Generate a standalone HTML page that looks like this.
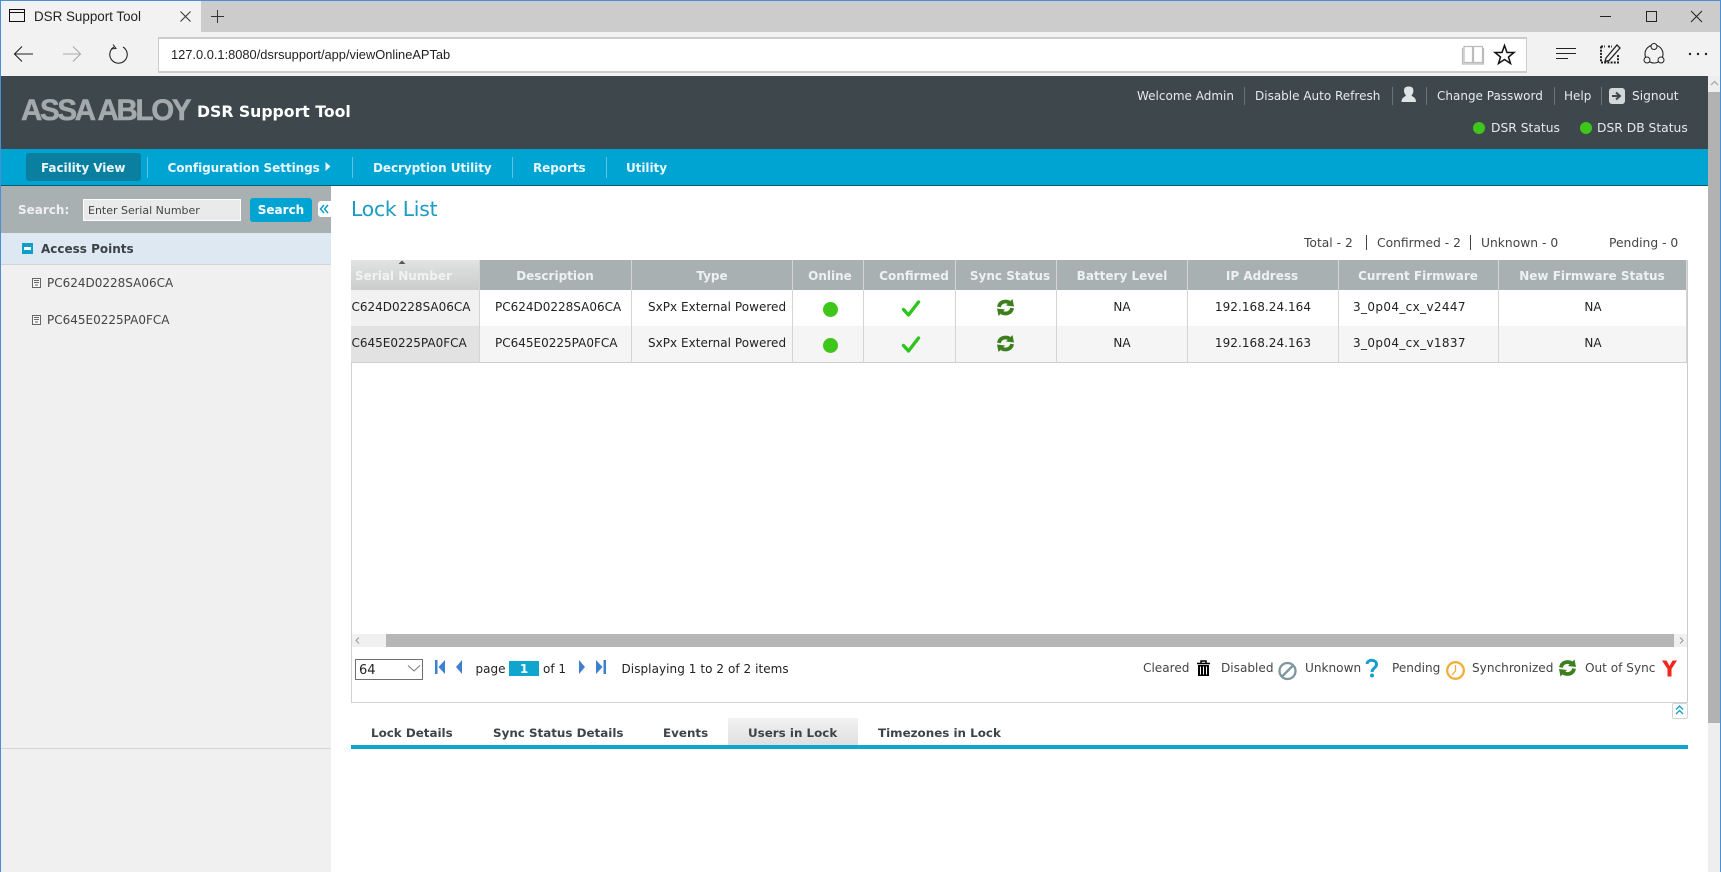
<!DOCTYPE html>
<html lang="en"><head><meta charset="utf-8"><title>DSR Support Tool</title>
<style>
html,body{margin:0;padding:0;width:1721px;height:872px;overflow:hidden;background:#fff}
body{position:relative;font-family:"DejaVu Sans","Liberation Sans",sans-serif;font-size:12px;color:#333}
.b{position:absolute}
.t{position:absolute;white-space:nowrap;line-height:20px;margin-top:-9px}
.c{transform:translateX(-50%)}
.w{color:#fff}
.bd{font-weight:bold}
.ch{font-family:"Liberation Sans",sans-serif;color:#222}
.nav{color:#e8f6fb;font-weight:bold;font-size:12px;letter-spacing:-.06px}
.hd{color:#e6eaeb;font-size:12px}
.th{color:#eef1f1;font-weight:bold;font-size:12px;top:275px}
.td{color:#222;font-size:12px}
.sep{position:absolute;width:1px}
.lg{color:#444;font-size:12.1px;top:667px}
.tab{color:#3c4448;font-weight:bold;font-size:11.9px;top:732px}
svg{position:absolute;left:0;top:0}
</style></head><body>
<!-- browser chrome -->
<div class="b" style="left:0;top:0;width:1721px;height:32px;background:#ccc"></div>
<div class="b" style="left:0;top:0;width:201px;height:32px;background:#f2f2f2"></div>
<div class="b" style="left:0;top:32px;width:1721px;height:44px;background:#f2f2f2"></div>
<div class="b" style="left:158px;top:37px;width:1367px;height:32px;background:#fff;border:1px solid #ccc;border-width:2px 1px"></div>
<div class="t ch" style="left:34px;top:16px;font-size:13.4px">DSR Support Tool</div>
<div class="t ch" style="left:171px;top:54px;font-size:12.85px">127.0.0.1:8080/dsrsupport/app/viewOnlineAPTab</div>
<!-- header -->
<div class="b" style="left:0;top:76px;width:1708px;height:73px;background:#3d474c"></div>
<div class="b" style="left:0;top:149px;width:1708px;height:36px;background:#00a4d3;border-bottom:1px solid #0b5a70"></div>
<div class="b" style="left:26px;top:153px;width:115px;height:28px;background:#0a7f9f;border-radius:3px"></div>
<div class="t" style="left:21px;top:110px;font-family:'Liberation Sans',sans-serif;font-weight:bold;font-size:29.5px;letter-spacing:-2.3px;color:#a4aaac;-webkit-text-stroke:.5px #a4aaac">ASSA ABLOY</div>
<div class="t w bd" style="left:197px;top:111px;font-size:15.7px;font-family:'DejaVu Sans',sans-serif">DSR Support Tool</div>
<div class="t hd" style="left:1137px;top:95px">Welcome Admin</div>
<div class="sep" style="left:1244px;top:87px;height:18px;background:#697276"></div>
<div class="t hd" style="left:1255px;top:95px">Disable Auto Refresh</div>
<div class="sep" style="left:1392px;top:87px;height:18px;background:#697276"></div>
<div class="sep" style="left:1426px;top:87px;height:18px;background:#697276"></div>
<div class="t hd" style="left:1437px;top:95px">Change Password</div>
<div class="sep" style="left:1554px;top:87px;height:18px;background:#697276"></div>
<div class="t hd" style="left:1564px;top:95px">Help</div>
<div class="sep" style="left:1601px;top:87px;height:18px;background:#697276"></div>
<div class="t hd" style="left:1632px;top:95px;font-size:12.2px">Signout</div>
<div class="t hd" style="left:1491px;top:127px;font-size:12.3px">DSR Status</div>
<div class="t hd" style="left:1597px;top:127px;font-size:12.3px">DSR DB Status</div>
<!-- nav -->
<div class="t nav" style="left:41px;top:167px;color:#e9f6fa">Facility View</div>
<div class="sep" style="left:147px;top:157px;height:21px;background:#5cc4e2"></div>
<div class="t nav" style="left:167.5px;top:167px">Configuration Settings</div>
<div class="sep" style="left:352px;top:157px;height:21px;background:#5cc4e2"></div>
<div class="t nav" style="left:373px;top:167px">Decryption Utility</div>
<div class="sep" style="left:512px;top:157px;height:21px;background:#5cc4e2"></div>
<div class="t nav" style="left:533px;top:167px">Reports</div>
<div class="sep" style="left:606px;top:157px;height:21px;background:#5cc4e2"></div>
<div class="t nav" style="left:626px;top:167px">Utility</div>
<!-- sidebar -->
<div class="b" style="left:0;top:186px;width:331px;height:686px;background:#f0f0f0"></div>
<div class="b" style="left:0;top:186px;width:331px;height:47px;background:#a9b0b2"></div>
<div class="b" style="left:0;top:233px;width:331px;height:31px;background:#dde8f3;border-bottom:1px solid #cfd4d6"></div>
<div class="b" style="left:0;top:748px;width:331px;height:1px;background:#d4d4d4"></div>
<div class="t bd" style="left:18px;top:209px;color:#eef0f0;font-size:12px">Search:</div>
<div class="b" style="left:83px;top:199px;width:156px;height:20px;background:#e9ebeb;border:1px solid #fff"></div>
<div class="t" style="left:88px;top:210px;font-size:11px;color:#444">Enter Serial Number</div>
<div class="b" style="left:250px;top:198px;width:62px;height:24px;background:#00a4d3;border-radius:3px"></div>
<div class="t w bd c" style="left:281px;top:209px;font-size:12px">Search</div>
<div class="b" style="left:318px;top:201px;width:13px;height:16px;background:#fff;border-radius:3px 0 0 3px"></div>
<div class="b" style="left:22px;top:243px;width:11px;height:11px;background:#0e9fc9"></div>
<div class="b" style="left:24px;top:247px;width:7px;height:3px;background:#fff"></div>
<div class="t bd" style="left:41px;top:248px;color:#3b4145;font-size:12px">Access Points</div>
<div class="t" style="left:47px;top:282px;color:#444;font-size:12px">PC624D0228SA06CA</div>
<div class="t" style="left:47px;top:319px;color:#444;font-size:12px">PC645E0225PA0FCA</div>
<!-- main -->
<div class="t" style="left:351px;top:209px;font-size:20.3px;color:#1a9cc4;line-height:26px;margin-top:-13px;font-family:'DejaVu Sans',sans-serif;letter-spacing:-.2px">Lock List</div>
<div class="t td" style="left:1304px;top:242px;color:#444;font-size:12.3px">Total - 2</div>
<div class="sep" style="left:1366px;top:235px;height:15px;background:#444"></div>
<div class="t td" style="left:1377px;top:242px;color:#444;font-size:12.3px">Confirmed - 2</div>
<div class="sep" style="left:1470px;top:235px;height:15px;background:#444"></div>
<div class="t td" style="left:1481px;top:242px;color:#444;font-size:12.3px">Unknown - 0</div>
<div class="t td" style="left:1609px;top:242px;color:#444;font-size:12.3px">Pending - 0</div>
<!-- grid -->
<div class="b" style="left:351px;top:260px;width:1337px;height:443px;box-sizing:border-box;border:1px solid #cfd2d3;border-top:0;border-right:1px solid #c8cccc"></div>
<div class="b" style="left:351px;top:260px;width:1336px;height:30px;background:#a9b0b2"></div>
<div class="b" style="left:351px;top:260px;width:128px;height:30px;background:linear-gradient(#e2e2e2,#cbcdcd)"></div>
<div class="b" style="left:351px;top:290px;width:1336px;height:36px;background:#fff"></div>
<div class="b" style="left:351px;top:326px;width:1336px;height:36px;background:#f5f5f5"></div>
<div class="b" style="left:351px;top:290px;width:128px;height:36px;background:#f1f1f1"></div>
<div class="b" style="left:351px;top:326px;width:128px;height:36px;background:#e2e2e2"></div>
<div class="b" style="left:351px;top:362px;width:1337px;height:1px;background:#cdd0d1"></div>
<!-- col lines header -->
<div class="sep" style="left:479px;top:260px;height:103px;background:#d2d4d5"></div>
<div class="sep" style="left:631px;top:260px;height:103px;background:#d2d4d5"></div>
<div class="sep" style="left:792px;top:260px;height:103px;background:#d2d4d5"></div>
<div class="sep" style="left:863px;top:260px;height:103px;background:#d2d4d5"></div>
<div class="sep" style="left:955px;top:260px;height:103px;background:#d2d4d5"></div>
<div class="sep" style="left:1056px;top:260px;height:103px;background:#d2d4d5"></div>
<div class="sep" style="left:1187px;top:260px;height:103px;background:#d2d4d5"></div>
<div class="sep" style="left:1338px;top:260px;height:103px;background:#d2d4d5"></div>
<div class="sep" style="left:1498px;top:260px;height:103px;background:#d2d4d5"></div>
<div class="sep" style="left:1686px;top:260px;height:103px;background:#d2d4d5"></div>
<div class="t th" style="left:355px;color:#f2f2f2">Serial Number</div>
<div class="t th c" style="left:555px">Description</div>
<div class="t th c" style="left:712px">Type</div>
<div class="t th c" style="left:830px">Online</div>
<div class="t th c" style="left:914px">Confirmed</div>
<div class="t th c" style="left:1010px">Sync Status</div>
<div class="t th c" style="left:1122px">Battery Level</div>
<div class="t th c" style="left:1262px">IP Address</div>
<div class="t th c" style="left:1418px">Current Firmware</div>
<div class="t th c" style="left:1592px">New Firmware Status</div>
<div class="t td" style="left:351.5px;top:306px">C624D0228SA06CA</div>
<div class="t td" style="left:495px;top:306px">PC624D0228SA06CA</div>
<div class="t td" style="left:648px;top:306px;letter-spacing:.03px">SxPx External Powered</div>
<div class="t td c" style="left:1122px;top:306px">NA</div>
<div class="t td c" style="left:1263px;top:306px;letter-spacing:.05px">192.168.24.164</div>
<div class="t td" style="left:1353px;top:306px;letter-spacing:.36px">3_0p04_cx_v2447</div>
<div class="t td c" style="left:1593px;top:306px">NA</div>
<div class="t td" style="left:351.5px;top:342px">C645E0225PA0FCA</div>
<div class="t td" style="left:495px;top:342px">PC645E0225PA0FCA</div>
<div class="t td" style="left:648px;top:342px;letter-spacing:.03px">SxPx External Powered</div>
<div class="t td c" style="left:1122px;top:342px">NA</div>
<div class="t td c" style="left:1263px;top:342px;letter-spacing:.05px">192.168.24.163</div>
<div class="t td" style="left:1353px;top:342px;letter-spacing:.36px">3_0p04_cx_v1837</div>
<div class="t td c" style="left:1593px;top:342px">NA</div>
<!-- h scrollbar -->
<div class="b" style="left:352px;top:634px;width:1335px;height:13px;background:#f0f0f0"></div>
<div class="b" style="left:386px;top:634px;width:1288px;height:13px;background:#b6b6b6"></div>
<!-- pager -->
<div class="b" style="left:355px;top:659px;width:66px;height:19px;border:1px solid #6f6f6f;background:#fff"></div>
<div class="t" style="left:359px;top:670px;color:#222;font-size:13px">64</div>
<div class="t td" style="left:475.5px;top:668px">page</div>
<div class="b" style="left:509px;top:661px;width:30px;height:15px;background:#0ea5cf"></div>
<div class="t w bd c" style="left:524px;top:668px">1</div>
<div class="t td" style="left:543px;top:668px">of 1</div>
<div class="t td" style="left:621.500px;top:668px;letter-spacing:.06px">Displaying 1 to 2 of 2 items</div>
<!-- legend -->
<div class="t lg" style="left:1143px">Cleared</div>
<div class="t lg" style="left:1221px">Disabled</div>
<div class="t lg" style="left:1305px">Unknown</div>
<div class="t lg" style="left:1392px">Pending</div>
<div class="t lg" style="left:1472px">Synchronized</div>
<div class="t lg" style="left:1585px">Out of Sync</div>
<div class="b" style="left:1672px;top:703px;width:14px;height:14px;border:1px solid #d3d6d7;border-radius:2px;background:#fff"></div>
<!-- tabs -->
<div class="b" style="left:728px;top:718px;width:130px;height:27px;background:linear-gradient(#f2f2f2,#dfdfdf)"></div>
<div class="b" style="left:351px;top:745px;width:1337px;height:4px;background:#0ea5cf"></div>
<div class="t tab" style="left:371px">Lock Details</div>
<div class="t tab" style="left:493px">Sync Status Details</div>
<div class="t tab" style="left:663px">Events</div>
<div class="t tab" style="left:748px">Users in Lock</div>
<div class="t tab" style="left:878px">Timezones in Lock</div>
<!-- v scrollbar -->
<div class="b" style="left:1708px;top:76px;width:13px;height:796px;background:#eee"></div>
<div class="b" style="left:1708px;top:92px;width:13px;height:631px;background:#b2b2b2"></div>
<!-- window border -->
<div class="b" style="left:0;top:0;width:1721px;height:1px;background:#4a8fd6"></div>
<div class="b" style="left:0;top:0;width:1px;height:872px;background:#4a8fd6"></div>
<div class="b" style="left:1720px;top:0;width:1px;height:872px;background:#4a8fd6"></div>
<svg width="1721" height="872" viewBox="0 0 1721 872" fill="none">
<defs>
<g id="sync"><path d="M-6.500 -0.500C-6 -5 -1 -7.500 4 -5" stroke="#3d7f1e" stroke-width="3.800"/><path d="M0.500 -2L8.500 -1L7 -8.500Z" fill="#3d7f1e"/><path d="M6.500 0.500C6 5 1 7.500 -4 5" stroke="#3d7f1e" stroke-width="3.800"/><path d="M-0.500 2L-8.500 1L-7 8.500Z" fill="#3d7f1e"/></g>
<path id="check" d="M-7.500 0.500L-2.500 6L7.500 -7" stroke="#2fc51d" stroke-width="3.400" stroke-linecap="round" stroke-linejoin="round"/>
<g id="ap"><rect x="0.500" y="0.500" width="8" height="9" stroke="#666" fill="#f6f6f6"/><path d="M2 2.500h5M2 4.500h5M3 7h3" stroke="#666"/></g>
</defs>
<!-- chrome icons -->
<rect x="9.500" y="9.500" width="15" height="12" stroke="#111"/><path d="M9.500 12.500h15" stroke="#111"/>
<path d="M180.500 11.500l10 10M190.500 11.500l-10 10" stroke="#333"/>
<path d="M217.500 10v13M211 16.500h13" stroke="#333"/>
<path d="M33 54H15M22 46.500L14.500 54L22 61.500" stroke="#222" stroke-width="1.100"/>
<path d="M81 54H63M73 46.500L80.500 54L73 61.500" stroke="#aaa" stroke-width="1.100"/>
<path d="M114 47A8.700 8.700 0 1 0 123 47" stroke="#222" stroke-width="1.100"/><path d="M113 44.500L116 48.500L111 49" stroke="#222" stroke-width="1"/>
<path d="M1464 46.500h8.500v16h-8.500zM1473.500 46.500h9v16h-9zM1462.500 48v16h21v-16" stroke="#bbb" stroke-width="1.200"/>
<path d="M1504.500 45.500L1507 52.500H1514L1508.500 57L1510.500 63.500L1504.500 59.500L1498.500 63.500L1500.500 57L1495 52.500H1502Z" stroke="#111" stroke-width="1.500"/>
<path d="M1556 48.500H1576M1556 53.500H1576M1556 58.500H1568" stroke="#222" stroke-width="1.100"/>
<path d="M1601 46.500h4M1608 46.500h4M1601 46.500v16h17v-8" stroke="#222" stroke-dasharray="2 1.200" stroke-width="2"/>
<path d="M1606 58L1617 45L1620 48L1609 60.500L1605 61.500Z" stroke="#222" stroke-width="1.300"/>
<circle cx="1654" cy="54" r="9" stroke="#222" stroke-width="1.100"/>
<circle cx="1654" cy="46.500" r="3" stroke="#222" fill="#f2f2f2"/><circle cx="1647" cy="60" r="3" stroke="#222" fill="#f2f2f2"/><circle cx="1661" cy="60" r="3" stroke="#222" fill="#f2f2f2"/>
<circle cx="1690" cy="54" r="1.200" fill="#222"/><circle cx="1698" cy="54" r="1.200" fill="#222"/><circle cx="1706" cy="54" r="1.200" fill="#222"/>
<path d="M1600 16.500h11" stroke="#222"/><rect x="1646.500" y="11.500" width="10" height="10" stroke="#222"/><path d="M1691 11l11 11M1702 11l-11 11" stroke="#222"/>
<!-- header icons -->
<path d="M1401.500 102C1401.500 97 1405 97 1406 95.500C1404.500 94 1404 92 1404 90.500C1404 87.500 1406 86.500 1408.700 86.500C1411.400 86.500 1413.400 87.500 1413.400 90.500C1413.400 92 1413 94 1411.500 95.500C1412.500 97 1416 97 1416 102Z" fill="#dfe3e4"/>
<rect x="1609" y="88" width="16" height="16" rx="3" fill="#d5d8d9"/><path d="M1612 96h7M1616 92.500L1620 96L1616 99.500" stroke="#3d474c" stroke-width="2"/>
<circle cx="1479" cy="128" r="6" fill="#3fc61b"/><circle cx="1586" cy="128" r="6" fill="#3fc61b"/>
<path d="M330.500 166.500L325.500 162V171Z" fill="#e8f6fb"/>
<!-- sidebar icons -->
<path d="M328 205L324.500 209L328 213M324 205L320.500 209L324 213" stroke="#0e9fc9" stroke-width="1.500"/>
<use href="#ap" x="32" y="278"/><use href="#ap" x="32" y="315"/>
<path d="M402 260.500L398.500 264H405.500Z" fill="#555"/>
<!-- table icons -->
<circle cx="830.500" cy="309.500" r="7.500" fill="#3fc61b"/><circle cx="830.500" cy="345.500" r="7.500" fill="#3fc61b"/>
<use href="#check" x="911" y="309"/><use href="#check" x="911" y="345"/>
<use href="#sync" x="1005.500" y="307.500"/><use href="#sync" x="1005.500" y="343.500"/>
<!-- h scrollbar arrows -->
<path d="M359 637.500L356 640.500L359 643.500" stroke="#999"/><path d="M1680 637.500L1683 640.500L1680 643.500" stroke="#999"/>
<!-- v scrollbar arrow -->
<path d="M1711 85L1714.500 81.500L1718 85" stroke="#aaa" stroke-width="1.300"/>
<!-- pager icons -->
<path d="M408 665.500L414 671L420 665.500" stroke="#777"/>
<path d="M435 660h2.500v14h-2.500z" fill="#3f7fd0"/><path d="M445 660V674L438.500 667Z" fill="#3f7fd0"/>
<path d="M462 660V674L456 667Z" fill="#3f7fd0"/>
<path d="M579 660V674L585 667Z" fill="#3f7fd0"/>
<path d="M596 660V674L602.500 667Z" fill="#3f7fd0"/><path d="M603.500 660h2.500v14h-2.500z" fill="#3f7fd0"/>
<!-- legend icons -->
<path d="M1197 663.500h13M1201 663V661h5v2" stroke="#000" stroke-width="1.500"/><rect x="1198" y="665" width="11" height="11" fill="#000"/><path d="M1200.500 666.500v8M1203.500 666.500v8M1206.500 666.500v8" stroke="#fff"/>
<circle cx="1287.500" cy="671" r="8" stroke="#7d979f" stroke-width="2.300"/><path d="M1282 676.500L1293 665.500" stroke="#7d979f" stroke-width="2.300"/>
<path d="M1367 664C1367.500 659 1376.500 659 1376.500 664.500C1376.500 668 1372 668 1372 672" stroke="#129fd0" stroke-width="3"/><circle cx="1372" cy="675.500" r="2" fill="#129fd0"/>
<circle cx="1455.500" cy="670.500" r="8.300" stroke="#f2ae3b" stroke-width="2.300" fill="#fff"/><path d="M1455.500 665V671L1452 675" stroke="#f2ae3b" stroke-width="1.300"/>
<use href="#sync" x="1567.500" y="668"/>
<path d="M1662 660.500H1666.500L1669.500 666L1672.500 660.500H1677L1671.500 669V676.500H1667.500V669Z" fill="#f3261b"/>
<!-- collapse -->
<path d="M1676 709.500L1679.500 706L1683 709.500M1676 714L1679.500 710.500L1683 714" stroke="#0e9fc9" stroke-width="1.300"/>
</svg>
</body></html>
